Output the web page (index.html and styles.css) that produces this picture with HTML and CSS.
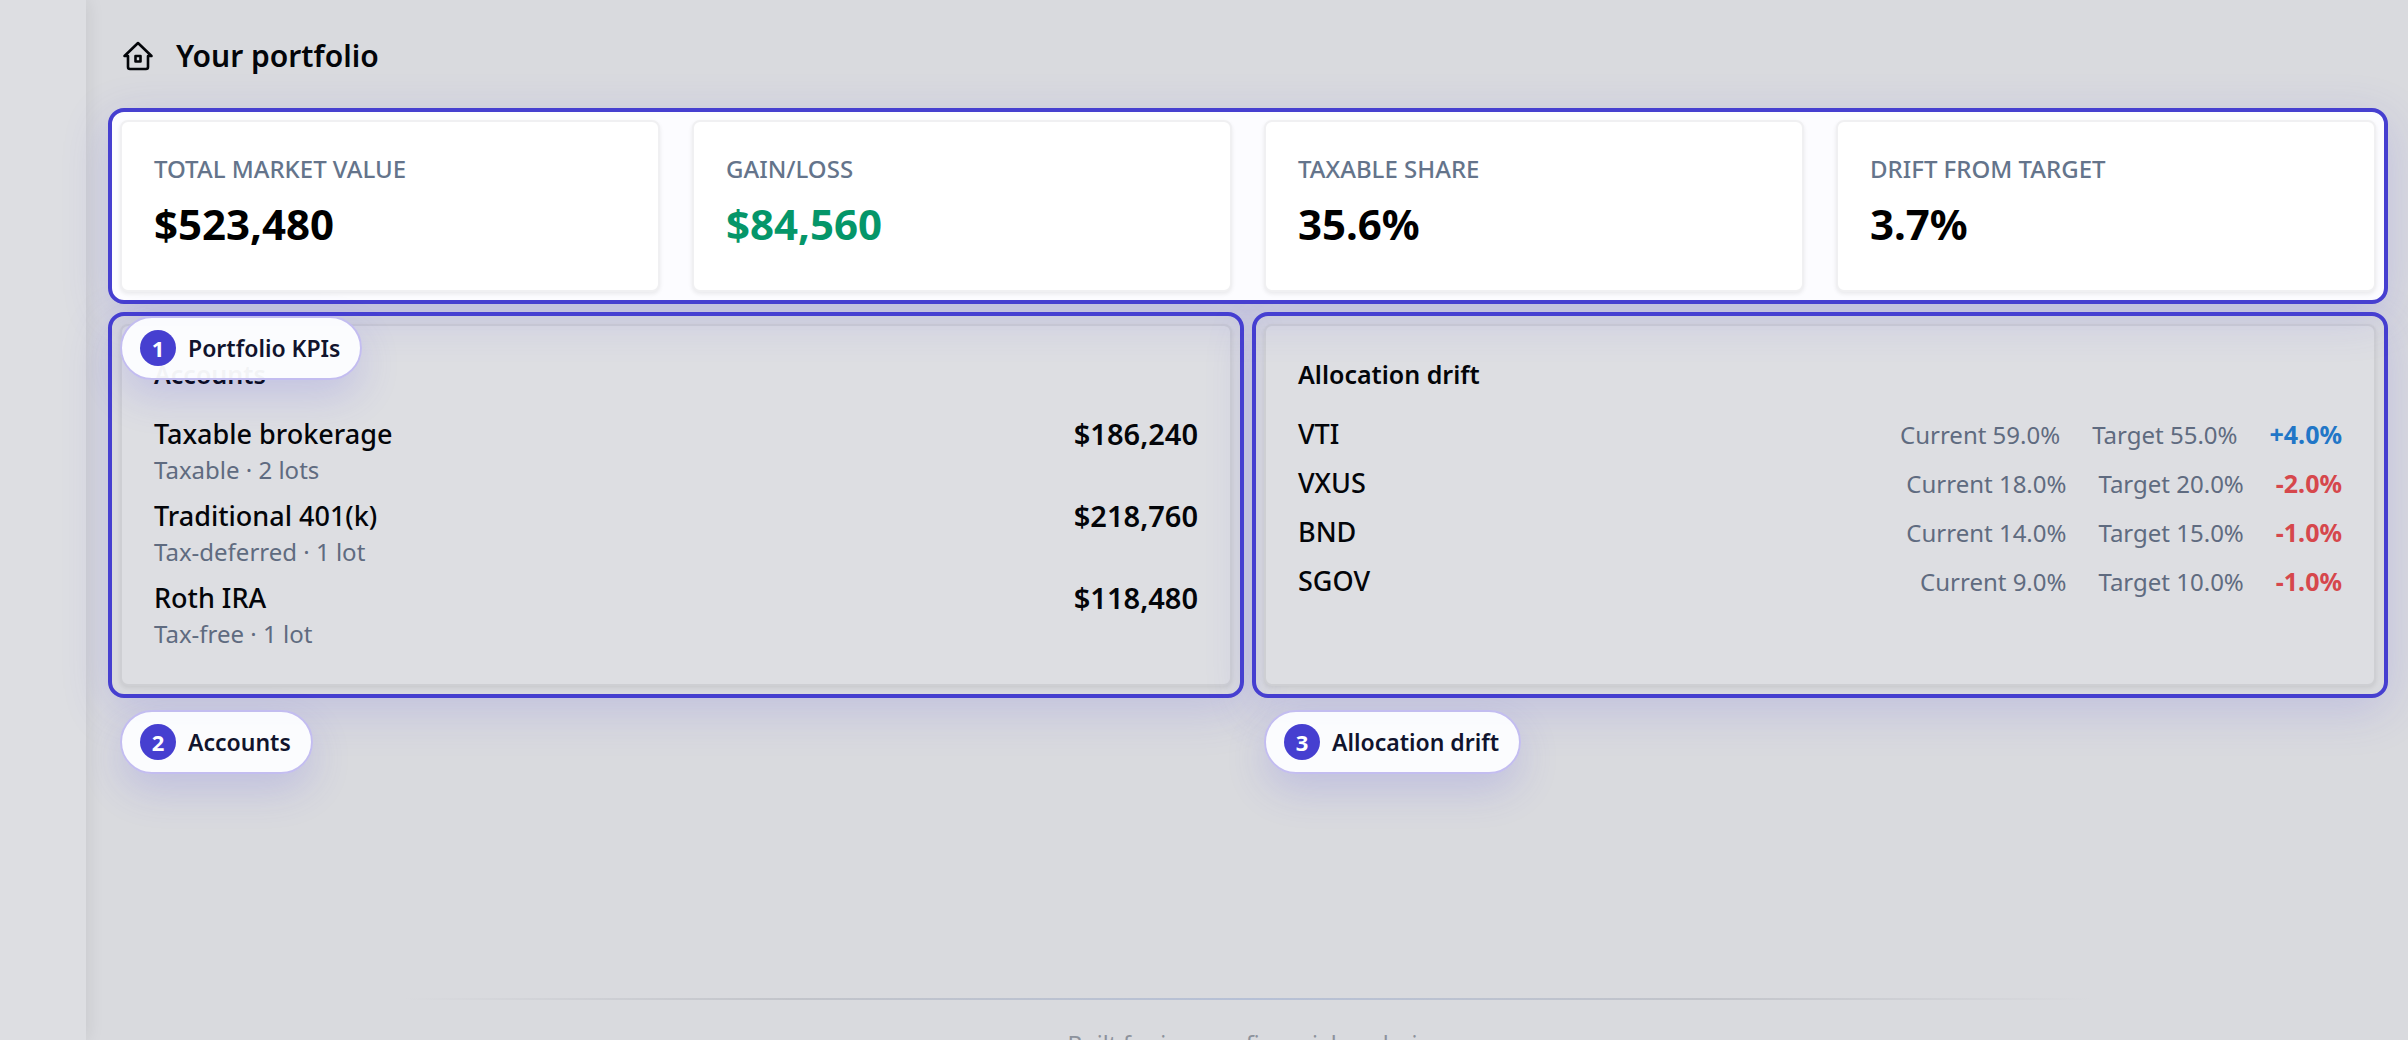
FILE: index.html
```html
<!DOCTYPE html>
<html lang="en">
<head>
    <meta charset="UTF-8">
    <meta name="viewport" content="width=device-width, initial-scale=1.0">
    <title>Your portfolio</title>
    <link rel="stylesheet" href="styles.css">
</head>
<body>

    <div class="app">
        <aside class="sidebar"></aside>

        <div class="content">
            <header class="page-header">
                <svg class="home-icon" viewBox="0 0 32 32" fill="none" stroke="currentColor" stroke-width="2.6" stroke-linejoin="round" stroke-linecap="round" aria-hidden="true">
                    <path d="M2.5 16 16 3l13.5 13H26v11a2 2 0 0 1-2 2H8a2 2 0 0 1-2-2V16z"/>
                    <rect x="13.5" y="16" width="5" height="5.5"/>
                </svg>
                <h1>Your portfolio</h1>
            </header>

            <main class="dashboard">
                <!-- KPIs -->
                <section class="callout callout-lit">
                    <div class="kpi-grid">
                        <div class="card">
                            <div class="kpi-label">Total market value</div>
                            <div class="kpi-value">$523,480</div>
                        </div>
                        <div class="card">
                            <div class="kpi-label">Gain/Loss</div>
                            <div class="kpi-value gain">$84,560</div>
                        </div>
                        <div class="card">
                            <div class="kpi-label">Taxable share</div>
                            <div class="kpi-value">35.6%</div>
                        </div>
                        <div class="card">
                            <div class="kpi-label">Drift from target</div>
                            <div class="kpi-value">3.7%</div>
                        </div>
                    </div>
                    <div class="badge"><span class="badge-number">1</span>Portfolio KPIs</div>
                </section>

                <div class="panels">
                    <!-- Accounts -->
                    <section class="callout">
                        <div class="card">
                            <h2>Accounts</h2>
                            <div class="account-list">
                                <div class="account">
                                    <div>
                                        <div class="name">Taxable brokerage</div>
                                        <div class="detail">Taxable · 2 lots</div>
                                    </div>
                                    <div class="amount">$186,240</div>
                                </div>
                                <div class="account">
                                    <div>
                                        <div class="name">Traditional 401(k)</div>
                                        <div class="detail">Tax-deferred · 1 lot</div>
                                    </div>
                                    <div class="amount">$218,760</div>
                                </div>
                                <div class="account">
                                    <div>
                                        <div class="name">Roth IRA</div>
                                        <div class="detail">Tax-free · 1 lot</div>
                                    </div>
                                    <div class="amount">$118,480</div>
                                </div>
                            </div>
                        </div>
                        <div class="badge"><span class="badge-number">2</span>Accounts</div>
                    </section>

                    <!-- Allocation drift -->
                    <section class="callout">
                        <div class="card">
                            <h2>Allocation drift</h2>
                            <div class="drift-list">
                                <div class="drift-row">
                                    <span class="name">VTI</span>
                                    <span class="detail">Current 59.0%</span>
                                    <span class="detail">Target 55.0%</span>
                                    <span class="drift over">+4.0%</span>
                                </div>
                                <div class="drift-row">
                                    <span class="name">VXUS</span>
                                    <span class="detail">Current 18.0%</span>
                                    <span class="detail">Target 20.0%</span>
                                    <span class="drift under">-2.0%</span>
                                </div>
                                <div class="drift-row">
                                    <span class="name">BND</span>
                                    <span class="detail">Current 14.0%</span>
                                    <span class="detail">Target 15.0%</span>
                                    <span class="drift under">-1.0%</span>
                                </div>
                                <div class="drift-row">
                                    <span class="name">SGOV</span>
                                    <span class="detail">Current 9.0%</span>
                                    <span class="detail">Target 10.0%</span>
                                    <span class="drift under">-1.0%</span>
                                </div>
                            </div>
                        </div>
                        <div class="badge"><span class="badge-number">3</span>Allocation drift</div>
                    </section>
                </div>
            </main>

            <footer class="footer">Built for income financial analysis</footer>
        </div>
    </div>

</body>
</html>
```

FILE: styles.css
```css
* {
    box-sizing: border-box;
}

body {
    font-family: 'Noto Sans', sans-serif;
    background-color: #d9dade;
    margin: 0;
    color: #030509;
}

.app {
    display: flex;
    height: 100vh;
    overflow: hidden;
}

.sidebar {
    flex: 0 0 86px;
    background-color: #dddee2;
    box-shadow: 2px 0 16px rgba(0, 0, 0, 0.08);
}

.content {
    flex: 1;
    display: flex;
    flex-direction: column;
    padding: 34px 20px 0 22px;
}

.page-header {
    display: flex;
    align-items: center;
    gap: 22px;
    height: 44px;
    margin: 0 0 30px 14px;
}

.home-icon {
    width: 32px;
    height: 32px;
}

h1 {
    font-size: 30px;
    line-height: 44px;
    font-weight: 600;
    margin: 0;
}

.dashboard {
    display: flex;
    flex-direction: column;
    gap: 8px;
}

/* Highlighted region with its numbered badge below */
.callout {
    position: relative;
    display: grid;
    border: 4px solid #463fd0;
    border-radius: 16px;
    padding: 8px;
    box-shadow: 0 12px 48px rgba(79, 70, 229, 0.18);
}

.callout-lit {
    z-index: 1;
    background-color: #fcfcff;
}

.kpi-grid {
    display: grid;
    grid-template-columns: repeat(4, 1fr);
    gap: 32px;
}

.panels {
    display: grid;
    grid-template-columns: 1fr 1fr;
    gap: 8px;
}

.card {
    background-color: #dddee2;
    border: 2px solid #cecfd3;
    border-radius: 8px;
    padding: 32px;
    box-shadow: 0 2px 4px rgba(0, 0, 0, 0.08);
}

.callout-lit .card {
    background-color: #fff;
    border-color: #f0f0f2;
}

.kpi-label {
    font-size: 24px;
    line-height: 30px;
    font-weight: 500;
    color: #64748b;
    text-transform: uppercase;
}

.kpi-value {
    font-size: 42px;
    line-height: 56px;
    font-weight: 700;
    padding: 12px 0 6px;
    color: #000;
}

.gain {
    color: #059669;
}

h2 {
    font-size: 25px;
    line-height: 32px;
    font-weight: 600;
    margin: 0 0 24px;
}

.account-list {
    display: grid;
    gap: 10px;
}

.drift-list {
    display: grid;
    align-content: start;
    gap: 9px;
}

.account {
    display: flex;
    justify-content: space-between;
}

.name,
.amount {
    line-height: 40px;
}

.name {
    font-size: 27px;
    font-weight: 500;
}

.amount {
    font-size: 29px;
    font-weight: 600;
}

.detail {
    font-size: 24px;
    line-height: 32px;
    color: #5f6b80;
}

.account:last-child {
    padding-bottom: 2px;
}

.drift-row {
    display: flex;
    align-items: baseline;
    gap: 32px;
    line-height: 40px;
}

.drift-row .name {
    flex: 1;
}

.drift {
    font-size: 25px;
    font-weight: 700;
}

.over {
    color: #2176c7;
}

.under {
    color: #d6474c;
}

.badge {
    position: absolute;
    z-index: 2;
    top: calc(100% + 16px);
    left: 8px;
    display: flex;
    align-items: center;
    gap: 12px;
    height: 64px;
    padding: 0 20px 0 18px;
    border: 2px solid #c3bdf0;
    border-radius: 32px;
    background-color: rgba(252, 253, 255, 0.96);
    box-shadow: 0 16px 40px rgba(79, 70, 229, 0.18);
    color: #11142d;
    font-size: 23px;
    font-weight: 600;
    white-space: nowrap;
}

.badge-number {
    display: grid;
    place-items: center;
    width: 36px;
    height: 36px;
    border-radius: 50%;
    background-color: #463fd0;
    color: #fff;
    font-size: 22px;
    font-weight: 700;
}

.footer {
    margin-top: 300px;
    padding-top: 30px;
    font-size: 23px;
    line-height: 32px;
    text-align: center;
    color: #8d929c;
    background: linear-gradient(90deg, transparent 13%, #c2c4ca 30%, #b6c0d6 50%, #c2c4ca 70%, transparent 87%) top / 100% 2px no-repeat;
}
```
